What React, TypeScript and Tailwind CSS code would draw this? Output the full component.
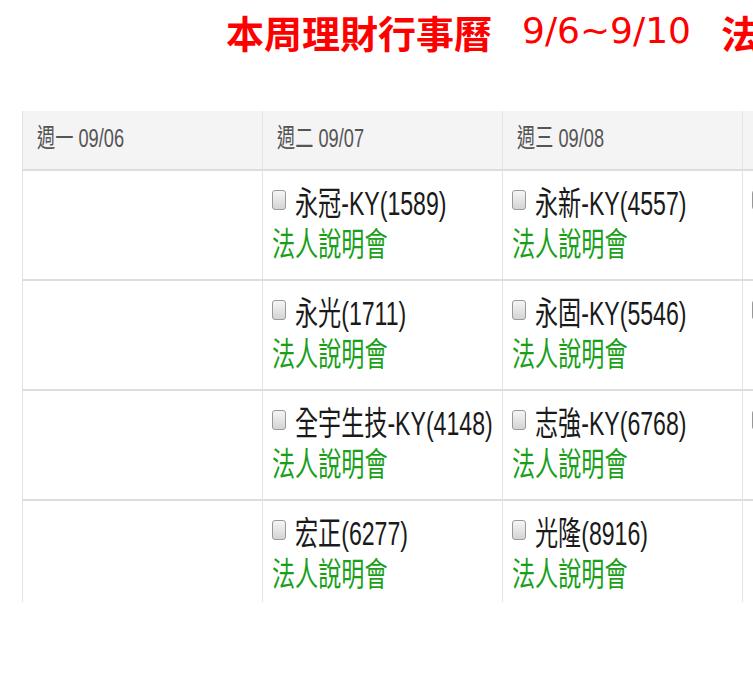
import React from "react";

type Item = { name: string; kind: "meet" | "div" };

const days: { label: string; items: Item[] }[] = [
  { label: "週一 09/06", items: [] },
  {
    label: "週二 09/07",
    items: [
      { name: "永冠-KY(1589)", kind: "meet" },
      { name: "永光(1711)", kind: "meet" },
      { name: "全宇生技-KY(4148)", kind: "meet" },
      { name: "宏正(6277)", kind: "meet" },
    ],
  },
  {
    label: "週三 09/08",
    items: [
      { name: "永新-KY(4557)", kind: "meet" },
      { name: "永固-KY(5546)", kind: "meet" },
      { name: "志強-KY(6768)", kind: "meet" },
      { name: "光隆(8916)", kind: "meet" },
    ],
  },
  {
    label: "週四 09/09",
    items: [
      { name: "中華(2204)", kind: "div" },
      { name: "聯詠(3034)", kind: "div" },
      { name: "台達電(2308)", kind: "div" },
    ],
  },
];

const font = "font-['Liberation_Sans','Noto_Sans_CJK_TC',sans-serif]";

// text in the calendar is drawn horizontally condensed
function Narrow({ children, className = "" }: { children: React.ReactNode; className?: string }) {
  return (
    <span className={`inline-block origin-left scale-x-[0.7] whitespace-nowrap ${className}`}>{children}</span>
  );
}

function Checkbox() {
  return (
    <span className="w-[14px] h-[20px] shrink-0 mb-[8px] rounded-[3px] border border-[#999999] bg-gradient-to-b from-[#f6f6f6] to-[#d4d4d4]" />
  );
}

function Cell({ item }: { item?: Item }) {
  return (
    <div className="h-[110px] border-l border-b-2 border-l-[#e3e3e3] border-b-[#dddddd] pl-[9px] pt-[12px]">
      {item && (
        <>
          <div className="flex items-center h-[41px] gap-[9px]">
            <Checkbox />
            <Narrow className="text-[33px] leading-[41px] text-[#1a1a1a]">{item.name}</Narrow>
          </div>
          <div className="h-[41px] flex items-center">
            <Narrow
              className={`text-[33px] leading-[41px] ${item.kind === "meet" ? "text-[#1a9f1a]" : "text-[#f2b400]"}`}
            >
              {item.kind === "meet" ? "法人說明會" : "除權息"}
            </Narrow>
          </div>
        </>
      )}
    </div>
  );
}

export default function App() {
  return (
    <div className="w-[753px] h-[683px] overflow-hidden bg-white relative">
      <div className="h-[62px] flex items-center pl-[226px] whitespace-nowrap font-['Noto_Sans_CJK_TC',sans-serif] font-bold text-[38px] text-[#ff0000]">
        <span>本周理財行事曆</span>
        <span className="ml-[30px] font-['DejaVu_Sans',sans-serif] font-normal text-[36px]">9/6~9/10</span>
        <span className="ml-[30px]">法人說明會</span>
      </div>

      <div className={`ml-[22px] mt-[49px] h-[491px] w-[1000px] overflow-hidden ${font}`}>
        <div className="grid grid-cols-[repeat(4,240px)]">
          {days.map((d) => (
            <div
              key={d.label}
              className="h-[60px] bg-[#f4f4f4] border-l border-b-2 border-l-[#e3e3e3] border-b-[#dddddd] pl-[14px] pb-[4px] flex items-center"
            >
              <Narrow className="text-[26px] leading-[30px] text-[#555555]">{d.label}</Narrow>
            </div>
          ))}
          {[0, 1, 2, 3].map((r) =>
            days.map((d) => <Cell key={d.label + r} item={d.items[r]} />)
          )}
        </div>
      </div>
    </div>
  );
}
